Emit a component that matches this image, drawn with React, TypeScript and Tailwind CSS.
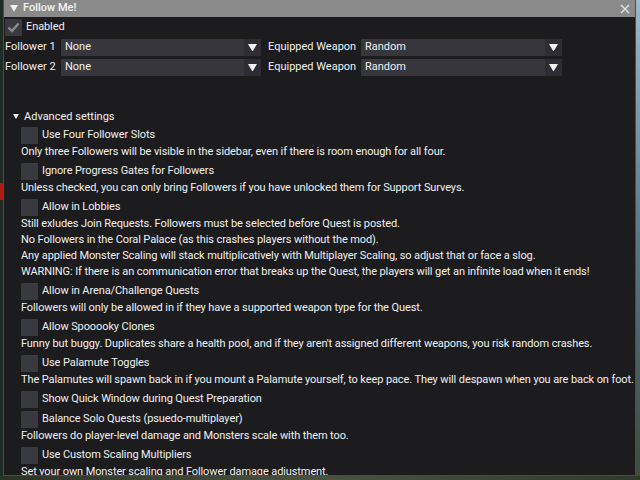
const font = { fontFamily: 'Roboto, "Liberation Sans", sans-serif' }

function Tri({ size = 8, className = '' }: { size?: number; className?: string }) {
  return (
    <svg width={size} height={size * 0.85} viewBox="0 0 10 8.5" className={className}>
      <polygon points="0,0 10,0 5,8.5" fill="#f2f2f2" />
    </svg>
  )
}

function CheckRow({ label, checked = false }: { label: string; checked?: boolean }) {
  return (
    <div className="flex items-center h-[18px]">
      <div className="w-[17px] h-[17px] bg-[#393940] flex items-center justify-center shrink-0">
        {checked && (
          <svg width="13" height="11" viewBox="0 0 13 11">
            <polyline points="1.5,5.5 5,9 11.5,1.5" fill="none" stroke="#8c8c8c" strokeWidth="2.4" />
          </svg>
        )}
      </div>
      <span className="ml-[4px] text-[11px] tracking-[-0.1px] leading-[14px] text-[#f0f0f0] whitespace-nowrap">{label}</span>
    </div>
  )
}

function Line({ children }: { children: React.ReactNode }) {
  return (
    <div className="h-[14px] text-[11px] tracking-[-0.1px] leading-[12px] text-[#f0f0f0] whitespace-nowrap">
      {children}
    </div>
  )
}

function Combo({ value, width }: { value: string; width: string }) {
  return (
    <div className={`flex h-[17px] shrink-0 ${width}`}>
      <div className="flex-1 bg-[#37363d] flex items-center pl-[4px] text-[11px] text-[#f0f0f0]">{value}</div>
      <div className="w-[17px] bg-[#2e2d33] flex items-center justify-center">
        <Tri size={9} />
      </div>
    </div>
  )
}

export default function App() {
  return (
    <div className="w-[640px] h-[480px] overflow-hidden bg-[#2c352b] flex flex-col" style={font}>
      <div className="flex h-[476px]">
        <div className="w-[3px] flex flex-col bg-[#1f2b24]">
          <div className="h-[183px]" />
          <div className="h-[17px] bg-[#b01818]" />
        </div>
        <div className="w-[633px] flex flex-col border border-[#4a4a50] border-t-0 bg-[#1c1c1f] overflow-hidden">
          <div className="h-[17px] bg-[#8a8a8a] flex items-center pl-[6px] pr-[5px] shrink-0">
            <Tri size={8} />
            <span className="ml-[5px] text-[11px] font-medium text-[#f4f4f4]">Follow Me!</span>
            <div className="flex-1" />
            <svg width="10" height="10" viewBox="0 0 10 10">
              <path d="M1 1L9 9M9 1L1 9" stroke="#e6e6e6" strokeWidth="1.3" />
            </svg>
          </div>
          <div className="flex flex-col pl-[1px] pt-[1px]">
            <div>
              <CheckRow label="Enabled" checked />
            </div>
            <div className="flex items-center mt-[3px] h-[17px]">
              <span className="w-[56px] text-[11px] text-[#f0f0f0] whitespace-nowrap">Follower 1</span>
              <Combo value="None" width="w-[200px]" />
              <span className="ml-[7px] w-[93px] text-[11px] text-[#f0f0f0] whitespace-nowrap">Equipped Weapon</span>
              <Combo value="Random" width="w-[201px]" />
            </div>
            <div className="flex items-center mt-[3px] h-[17px]">
              <span className="w-[56px] text-[11px] text-[#f0f0f0] whitespace-nowrap">Follower 2</span>
              <Combo value="None" width="w-[200px]" />
              <span className="ml-[7px] w-[93px] text-[11px] text-[#f0f0f0] whitespace-nowrap">Equipped Weapon</span>
              <Combo value="Random" width="w-[201px]" />
            </div>
            <div className="flex items-center h-[16px] mt-[33px] pl-[8px]">
              <Tri size={6} />
              <span className="ml-[5px] text-[11px] text-[#f0f0f0]">Advanced settings</span>
            </div>
            <div className="flex flex-col gap-[2px] pl-[16px] mt-[1px]">
              <CheckRow label="Use Four Follower Slots" />
              <Line>Only three Followers will be visible in the sidebar, even if there is room enough for all four.</Line>
              <CheckRow label="Ignore Progress Gates for Followers" />
              <Line>Unless checked, you can only bring Followers if you have unlocked them for Support Surveys.</Line>
              <CheckRow label="Allow in Lobbies" />
              <Line>Still exludes Join Requests. Followers must be selected before Quest is posted.</Line>
              <Line>No Followers in the Coral Palace (as this crashes players without the mod).</Line>
              <Line>Any applied Monster Scaling will stack multiplicatively with Multiplayer Scaling, so adjust that or face a slog.</Line>
              <Line>WARNING: If there is an communication error that breaks up the Quest, the players will get an infinite load when it ends!</Line>
              <CheckRow label="Allow in Arena/Challenge Quests" />
              <Line>Followers will only be allowed in if they have a supported weapon type for the Quest.</Line>
              <CheckRow label="Allow Spooooky Clones" />
              <Line>Funny but buggy. Duplicates share a health pool, and if they aren't assigned different weapons, you risk random crashes.</Line>
              <CheckRow label="Use Palamute Toggles" />
              <Line>The Palamutes will spawn back in if you mount a Palamute yourself, to keep pace. They will despawn when you are back on foot.</Line>
              <CheckRow label="Show Quick Window during Quest Preparation" />
              <CheckRow label="Balance Solo Quests (psuedo-multiplayer)" />
              <Line>Followers do player-level damage and Monsters scale with them too.</Line>
              <CheckRow label="Use Custom Scaling Multipliers" />
              <Line>Set your own Monster scaling and Follower damage adjustment.</Line>
            </div>
          </div>
        </div>
        <div className="w-[4px] bg-gradient-to-b from-[#9db8cb] via-[#5b7585] to-[#3e4a3c]" />
      </div>
      <div className="flex-1 bg-gradient-to-r from-[#2a3326] via-[#4a5340] to-[#2f3a2c]" />
    </div>
  )
}
